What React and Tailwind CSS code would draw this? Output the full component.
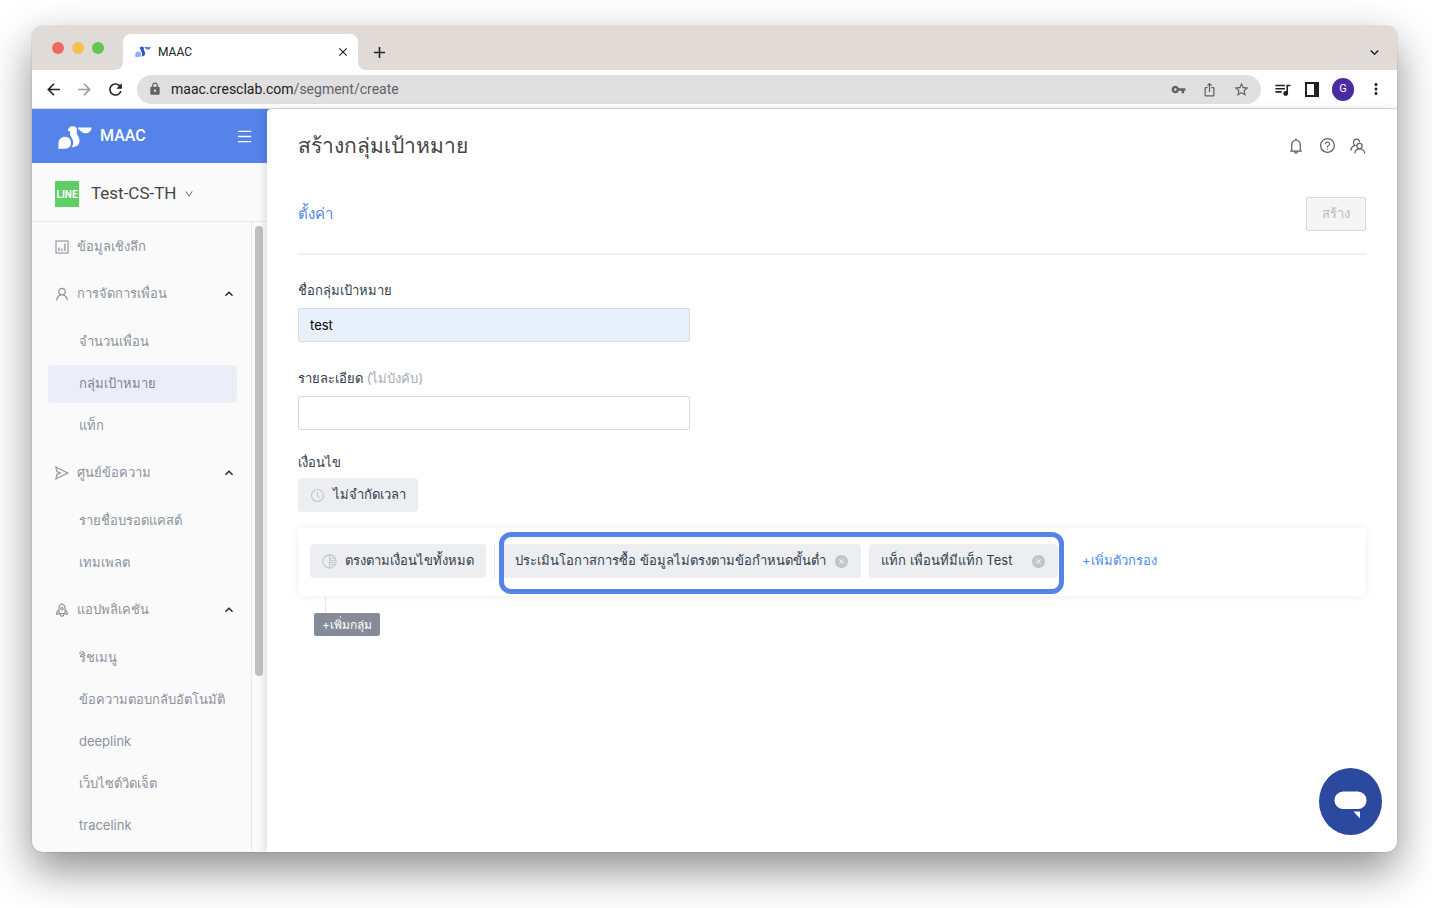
import { useState } from 'react';
import clsx from 'clsx';
import {
  AiOutlineBell,
  AiOutlineDown,
  AiOutlineMenu,
  AiOutlineQuestionCircle,
  AiOutlineSend,
  AiOutlineUser,
  AiFillCloseCircle,
  AiOutlineClockCircle,
} from 'react-icons/ai';
import {
  MdArrowBack,
  MdArrowForward,
  MdRefresh,
  MdLock,
  MdVpnKey,
  MdIosShare,
  MdStarBorder,
  MdQueueMusic,
  MdMoreVert,
  MdClose,
  MdAdd,
  MdKeyboardArrowDown,
  MdKeyboardArrowUp,
} from 'react-icons/md';

const menu = [
  { label: 'ข้อมูลเชิงลึก', icon: ChartIcon },
  {
    label: 'การจัดการเพื่อน',
    icon: AiOutlineUser,
    children: ['จำนวนเพื่อน', 'กลุ่มเป้าหมาย', 'แท็ก'],
  },
  {
    label: 'ศูนย์ข้อความ',
    icon: AiOutlineSend,
    children: ['รายชื่อบรอดแคสต์', 'เทมเพลต'],
  },
  {
    label: 'แอปพลิเคชัน',
    icon: RocketIcon,
    children: ['ริชเมนู', 'ข้อความตอบกลับอัตโนมัติ', 'deeplink', 'เว็บไซต์วิดเจ็ต', 'tracelink'],
  },
];

function ChartIcon({ className }) {
  return (
    <svg viewBox="-1 -1 16 16" className={className} fill="none" stroke="currentColor" strokeWidth="1.1">
      <rect x="1" y="1" width="12" height="12" />
      <path d="M4 7.5V11M7 8.5V11M10 3.5V11" strokeWidth="1.3" />
    </svg>
  );
}

function RocketIcon({ className }) {
  return (
    <svg viewBox="-1 -1 16 16" className={className} fill="none" stroke="currentColor" strokeWidth="1.1" strokeLinejoin="round">
      <path d="M4 10.5V5C4 3 5.5 1.4 7 .7C8.5 1.4 10 3 10 5V10.5Z" />
      <path d="M4 7L1.8 9V11.5L4 10.5M10 7L12.2 9V11.5L10 10.5" />
      <path d="M5 10.5C5 12.2 6 13.2 7 13.3C8 13.2 9 12.2 9 10.5" />
      <circle cx="7" cy="5.8" r="1.2" />
    </svg>
  );
}

function PelicanIcon({ className, tail = 'currentColor', beak = 'currentColor' }) {
  return (
    <svg viewBox="0 0 34 24" className={className} fill="currentColor">
      <path fill={tail} d="M.5 23.5V17.5C.5 13.5 3.5 10.8 7.2 10.8C10.8 10.8 13 13.8 13 17C13 20.5 10.5 22.7 7 22.7H1.8Z" />
      <path d="M10 5.2C9.8 2.2 12 .3 14.8 .3C18 .3 19.4 2.8 18.8 5.5C18 8.5 21.5 10 21.5 14.5C21.5 19 18.5 21.3 13.5 21.3C15.2 19.5 15.6 17 14.8 14.2C14 11.5 11.5 9.5 12 6.5C12.2 5.3 11.3 4.8 10 5.2Z" />
      <path fill={beak} d="M20 1.5H33.5C33.5 5 30.8 7.3 27.2 7.3C23.7 7.3 22.5 4 20 3Z" />
    </svg>
  );
}

function SidePanelIcon({ className }) {
  return (
    <svg viewBox="0 0 14 15" className={className} fill="#202124">
      <path fillRule="evenodd" d="M0 0H14V15H0ZM2 2V13H9V2Z" />
    </svg>
  );
}

function FriendsIcon({ className }) {
  return (
    <svg viewBox="0 0 16 16" className={className} fill="none" stroke="currentColor" strokeWidth="1.2" strokeLinecap="round">
      <circle cx="9.5" cy="8" r="2.7" />
      <path d="M4.8 15C5 12.5 7 10.8 9.5 10.8S14.4 12.5 14.7 15" />
      <path d="M4.6 7.2C2.8 6 2.8 1.2 6.5 1.2C8.2 1.2 9.3 2.3 9.5 3.6M4.6 7.2C2.5 8.2 1 9.8 .8 12.2M4.6 7.2L5.3 7.5" />
    </svg>
  );
}

function HalfCircleIcon({ className }) {
  return (
    <svg viewBox="0 0 14 14" className={className} stroke="currentColor" fill="none">
      <circle cx="7" cy="7" r="6.2" />
      <path d="M7 1V13M7 4H12M7 6H13M7 8H13M7 10H12" strokeWidth=".9" />
    </svg>
  );
}

function TabFlare({ className }) {
  return (
    <svg viewBox="0 0 8 8" className={clsx('absolute bottom-0 h-2 w-2', className)} fill="white">
      <path d="M8 0V8H0C4.4 8 8 4.4 8 0Z" />
    </svg>
  );
}

function BrowserBar() {
  return (
    <header>
      <div className="flex h-11 items-end bg-[#e1dbd8] pr-3.5">
        <div className="flex h-11 w-[91px] shrink-0 items-center gap-2 pl-5">
          <span className="size-3 rounded-full bg-[#ed6a5f]" />
          <span className="size-3 rounded-full bg-[#f5bf4f]" />
          <span className="size-3 rounded-full bg-[#62c655]" />
        </div>
        <div className="relative flex h-9 w-[235px] items-center rounded-t-lg bg-white px-3">
          <TabFlare className="right-full" />
          <PelicanIcon className="h-3 w-4 text-[#2f55c9]" tail="#8fb0f5" beak="#5583ea" />
          <span className="ml-[7px] text-xs text-[#202124]">MAAC</span>
          <button type="button" aria-label="Close tab" className="ml-auto -mr-1">
            <MdClose className="size-3.5 text-[#202124]" />
          </button>
          <TabFlare className="left-full -scale-x-100" />
        </div>
        <button type="button" aria-label="New tab" className="ml-3 flex h-9 items-center">
          <MdAdd className="size-[19px] text-[#202124]" />
        </button>
        <button type="button" aria-label="Search tabs" className="ml-auto flex h-9 items-center">
          <MdKeyboardArrowDown className="size-[17px] text-[#202124]" />
        </button>
      </div>
      <div className="flex h-[39px] items-center border-b border-[#dcdcdc] bg-white px-3 text-[#202124]">
        <button type="button" aria-label="Back"><MdArrowBack className="size-[19px]" /></button>
        <button type="button" aria-label="Forward" className="ml-3"><MdArrowForward className="size-[19px] text-[#9b9b9b]" /></button>
        <button type="button" aria-label="Reload" className="ml-3"><MdRefresh className="size-[19px]" /></button>
        <div className="ml-3 flex h-[29px] flex-1 items-center rounded-full bg-[#e0e0e0] px-[11px] text-[#5f6368]">
          <MdLock className="size-3.5" />
          <span className="ml-[9px] flex-1 text-sm">
            <span className="text-[#202124]">maac.cresclab.com</span>/segment/create
          </span>
          <div className="flex items-center gap-4">
            <MdVpnKey className="size-[15px]" />
            <MdIosShare className="size-[15px]" />
            <MdStarBorder className="size-[17px]" />
          </div>
        </div>
        <div className="ml-3 flex items-center gap-[13px]">
          <MdQueueMusic className="size-[19px]" />
          <SidePanelIcon className="h-[15px] w-3.5" />
          <span className="flex h-[23px] w-[22px] items-center justify-center rounded-full bg-[#4b2ca0] text-[11px] text-white">G</span>
          <MdMoreVert className="size-[18px]" />
        </div>
      </div>
    </header>
  );
}

function Sidebar({ active, onSelect }) {
  return (
    <aside className="flex w-[235px] shrink-0 flex-col bg-[#fafafa]">
      <div className="flex h-[54px] items-center bg-[#5583ea] pr-3.5 pl-[26px] text-white">
        <PelicanIcon className="mt-1 h-6 w-[34px]" />
        <span className="ml-2 text-base font-medium">MAAC</span>
        <button type="button" aria-label="Toggle menu" className="ml-auto">
          <AiOutlineMenu className="size-[17px]" />
        </button>
      </div>
      <button type="button" className="flex h-[59px] items-center border-b border-[#e8e8e8] pt-1 pl-[23px] text-[17px] text-[#444]">
        <span className="flex h-[26px] w-6 items-center justify-center bg-[#5fce64] text-[10px] font-bold text-white">LINE</span>
        <span className="ml-3">Test-CS-TH</span>
        <AiOutlineDown className="ml-[7px] size-2.5" />
      </button>
      <div className="flex flex-1">
        <nav className="flex-1 border-r border-[#e8e8e8] pt-1.5 font-['Inter','Noto_Sans',sans-serif] text-[13px] text-[#8b929d]">
          {menu.map(({ label, icon: Icon, children }) => (
            <div key={label} className="pb-[9px] last:pb-0">
              <button type="button" className="flex h-[38px] w-full items-center pr-3.5 pl-[22px]">
                <Icon className="size-4" />
                <span className="ml-[7px]">{label}</span>
                {children && <MdKeyboardArrowUp className="ml-auto size-4 text-[#202124]" />}
              </button>
              {children && (
                <ul className="flex flex-col gap-1 px-4 pt-2.5">
                  {children.map((item) => (
                    <li key={item}>
                      <a
                        href="#"
                        onClick={() => onSelect(item)}
                        className={clsx(
                          'flex h-[38px] items-center rounded pl-[31px] -mr-0.5 whitespace-nowrap',
                          item === active && 'bg-[#ebeef8] text-[#7b8494]'
                        )}
                      >
                        {item}
                      </a>
                    </li>
                  ))}
                </ul>
              )}
            </div>
          ))}
        </nav>
        <div className="w-[15px] px-[3px] pt-1">
          <div className="h-[450px] w-2 rounded-full bg-[#bfbfbf]" />
        </div>
      </div>
    </aside>
  );
}

function Chip({ className, children }) {
  return (
    <span className={clsx('flex h-[34px] items-center justify-between gap-2 rounded bg-[#eceef2] px-3 whitespace-nowrap', className)}>
      {children}
      <button type="button" aria-label="Remove filter">
        <AiFillCloseCircle className="size-[15px] text-[#c3c5c9]" />
      </button>
    </span>
  );
}

export default function App() {
  const [active, setActive] = useState('กลุ่มเป้าหมาย');
  const [name, setName] = useState('test');
  const [description, setDescription] = useState('');

  return (
    <div className="flex min-h-screen flex-col bg-white pt-[26px] pr-[35px] pb-14 pl-8 font-['Roboto','Noto_Sans',sans-serif]">
      <div className="flex flex-1 flex-col overflow-hidden rounded-[10px] bg-white shadow-[0_0_1px_rgba(0,0,0,0.5),0_18px_44px_rgba(0,0,0,0.45)]">
        <BrowserBar />
        <div className="flex flex-1 bg-[#5583ea]">
          <Sidebar active={active} onSelect={setActive} />
          <main className="relative flex min-w-0 flex-1 flex-col rounded-tl bg-white px-[31px] font-['Inter','Noto_Sans',sans-serif] text-[13px] text-[#333d4d] shadow-[-2px_0_8px_rgba(0,0,0,0.12)]">
            <div className="flex h-[73px] items-center justify-between text-[#444]">
              <h1 className="text-[21px] leading-6">สร้างกลุ่มเป้าหมาย</h1>
              <div className="flex items-center gap-3.5 text-[#5c6066]">
                <button type="button" aria-label="Notifications"><AiOutlineBell className="size-[18px]" /></button>
                <button type="button" aria-label="Help"><AiOutlineQuestionCircle className="size-[17px]" /></button>
                <button type="button" aria-label="Account"><FriendsIcon className="size-4" /></button>
              </div>
            </div>

            <div className="flex h-[73px] items-center justify-between border-b-2 border-[#f0f0f0] pb-2">
              <a href="#" className="text-[15px] leading-6 text-[#5583ea]">ตั้งค่า</a>
              <button type="button" disabled className="h-[34px] w-[60px] rounded-xs border border-[#d9d9d9] bg-[#f5f5f5] text-[#bdbdbd]">
                สร้าง
              </button>
            </div>

            <form className="mt-[23px] flex flex-col items-start">
              <label htmlFor="name" className="leading-6">ชื่อกลุ่มเป้าหมาย</label>
              <input
                id="name"
                value={name}
                onChange={(e) => setName(e.target.value)}
                className="mt-1.5 h-[34px] w-full max-w-[392px] rounded-xs border border-[#d9d9d9] bg-[#e8f0fe] px-[11px] text-black"
              />
              <label htmlFor="description" className="mt-6 leading-6">
                รายละเอียด <span className="text-[#a5abb5]">(ไม่บังคับ)</span>
              </label>
              <input
                id="description"
                value={description}
                onChange={(e) => setDescription(e.target.value)}
                className="mt-1.5 h-[34px] w-full max-w-[392px] rounded-xs border border-[#d9d9d9] px-[11px]"
              />
              <span className="mt-5 leading-6">เงื่อนไข</span>
              <button type="button" className="mt-1 flex h-[34px] min-w-[119px] items-center gap-2 rounded bg-[#eceef2] px-3">
                <AiOutlineClockCircle className="size-[15px] text-[#c3c5c9]" />
                ไม่จำกัดเวลา
              </button>
            </form>

            <section className="mt-4 flex min-h-[68px] flex-wrap items-center rounded px-3 pb-0.5 shadow-[0_0_8px_rgba(0,0,0,0.08)]">
              <button type="button" className="flex h-[34px] min-w-[176px] items-center gap-2 rounded bg-[#eceef2] px-3">
                <HalfCircleIcon className="size-[15px] text-[#c3c5c9]" />
                ตรงตามเงื่อนไขทั้งหมด
              </button>
              <span className="ml-2 h-[34px] w-px bg-[#e4e6ea]" />
              <div className="relative ml-2 flex gap-2">
                <Chip className="min-w-[358px]">ประเมินโอกาสการซื้อ ข้อมูลไม่ตรงตามข้อกำหนดขั้นต่ำ</Chip>
                <Chip className="min-w-[189px]">แท็ก เพื่อนที่มีแท็ก Test</Chip>
                <span className="pointer-events-none absolute -top-3 -right-1.5 -bottom-4 -left-1 rounded-xl border-[5px] border-[#5583ea]" />
              </div>
              <button type="button" className="ml-6 text-[#4a8bf0]">+เพิ่มตัวกรอง</button>
            </section>
            <div className="flex flex-col items-start pl-4">
              <span className="ml-[11px] h-[17px] w-px bg-[#e4e6ea]" />
              <button type="button" className="h-[23px] rounded-xs bg-[#868c97] px-2 text-xs leading-5 text-white">+เพิ่มกลุ่ม</button>
            </div>

            <button type="button" aria-label="Open chat" className="mt-auto -mr-4 mb-[17px] self-end">
              <svg viewBox="0 0 63 67" className="h-[67px] w-[63px]">
                <ellipse cx="31.5" cy="33.5" rx="31.5" ry="33.5" fill="#2a499f" />
                <rect x="15.5" y="23.5" width="32" height="17.5" rx="8.75" fill="white" />
                <path d="M34.5 43.5H41V50.5Z" fill="white" />
              </svg>
            </button>
          </main>
        </div>
      </div>
    </div>
  );
}
